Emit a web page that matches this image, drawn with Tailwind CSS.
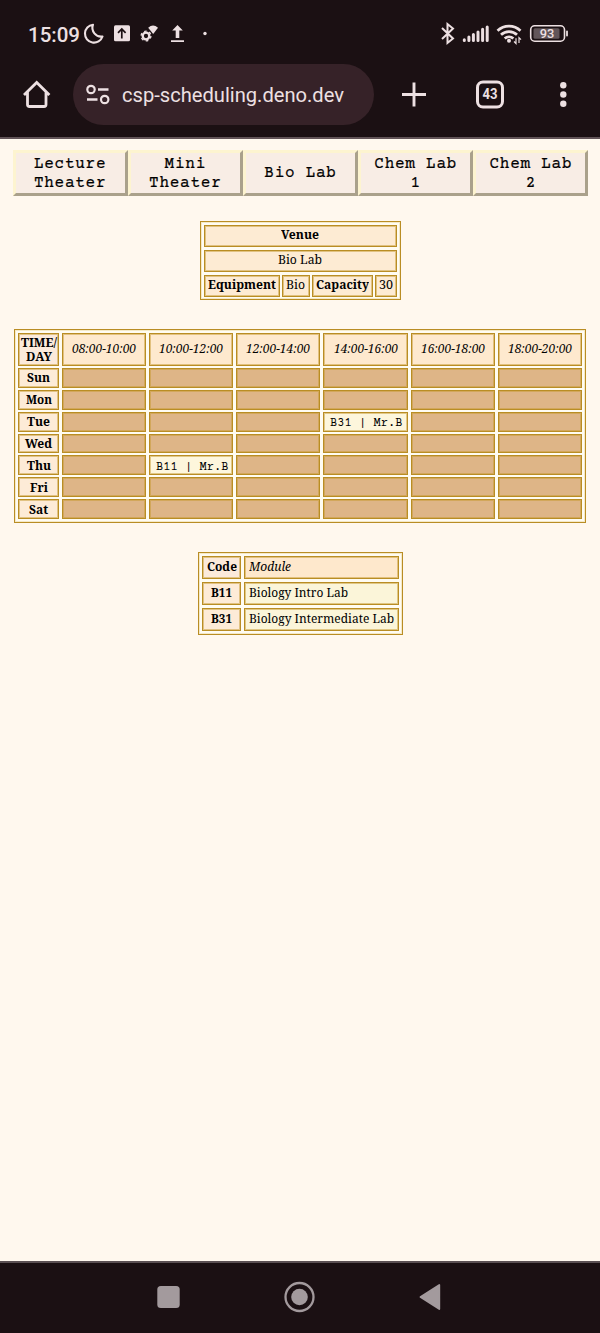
<!DOCTYPE html>
<html lang="en">
<head>
<meta charset="utf-8">
<title>Scheduling</title>
<script src="https://cdn.jsdelivr.net/npm/@tailwindcss/browser@4"></script>
</head>
<body class="bg-[#fff8ee]">
<div class="flex flex-col w-[600px] h-[1333px] overflow-hidden text-[#18110c]">
  <header class="h-[139px] shrink-0 bg-[#1b1013] border-b-2 border-[#615357] font-['Roboto',sans-serif] text-[#ede0e2]">
    <svg class="block" width="600" height="137" viewBox="0 0 600 137" fill="none" stroke="#ede0e2">
      <text x="28" y="41.500" font-size="20.5" font-weight="500" fill="#ede0e2" stroke="none" textLength="52" lengthAdjust="spacingAndGlyphs">15:09</text>
      <path d="M93 24.700A9 9 0 1 0 102.500 36.500A8.800 8.800 0 0 1 93 24.700Z" stroke-width="2.100" stroke-linejoin="round"/>
      <rect x="114" y="25.300" width="16" height="16" rx="1.500" fill="#ede0e2" stroke="none"/>
      <path d="M121.800 38.500V29M118 32.800l3.800-3.800 3.800 3.800" stroke="#1b1013" stroke-width="1.700"/>
      <circle cx="146" cy="36" r="3.300" stroke-width="2.300"/>
      <circle cx="146" cy="36" r="4.900" stroke-width="1.300" stroke-dasharray="2.600 2.531"/>
      <path d="M148.200 27.800Q153 23 158 27.800L153.200 34Z" fill="#ede0e2" stroke="none"/>
      <path d="M177.500 25l5.300 5.600h-3.500V38h-3.600v-7.400h-3.500ZM171 40.300h13v1.800h-13Z" fill="#ede0e2" stroke="none"/>
      <circle cx="205" cy="33.500" r="1.700" fill="#ede0e2" stroke="none"/>
      <path d="M442 28l11 10.500-5.500 4.500V24l5.500 4.500L442 39" stroke-width="2"/>
      <path d="M464.300 39.700v.8M468.900 37v3.500M473.400 34.500v6M478 32v8.500M482.600 29.300v11.200M487.200 27v13.500" stroke-width="3" stroke-linecap="round"/>
      <path d="M497.500 30.700a16.500 16.500 0 0 1 23 0M501 34.800a11.500 11.500 0 0 1 16 0M504.700 38.600a6.500 6.500 0 0 1 8.700 0" stroke-width="2.700"/>
      <circle cx="509" cy="40.700" r="2" fill="#ede0e2" stroke="none"/>
      <path d="M516 38.200v5.300l-2-2M519 43v-5.300l2 2" stroke-width="1.200"/>
      <rect x="530.700" y="25.800" width="33.800" height="15.400" rx="4" stroke-width="1.600"/>
      <rect x="533.500" y="28.300" width="26" height="10.400" rx="1.500" fill="#625559" stroke="none"/>
      <path d="M567 31.500v4" stroke-width="1.800" stroke-linecap="round"/>
      <text x="547" y="38.300" font-size="12.800" font-weight="500" fill="#ede0e2" stroke="none" text-anchor="middle">93</text>
      <path d="M24 95L36.700 82.500 49.400 95M27.500 91.500V104.500q0 2 2 2H44q2 0 2-2V91.500" stroke-width="2.800"/>
      <rect x="73" y="64" width="301" height="61" rx="30.500" fill="#362228" stroke="none"/>
      <circle cx="91" cy="89.500" r="3.700" stroke-width="2.200"/>
      <circle cx="104.700" cy="99.500" r="3.700" stroke-width="2.200"/>
      <path d="M98 89.500h10.500M87 99.500h10.500" stroke-width="2.300"/>
      <text x="122" y="102.300" font-size="20.500" fill="#ede0e2" stroke="none" textLength="222" lengthAdjust="spacingAndGlyphs">csp-scheduling.deno.dev</text>
      <path d="M402 94.500h24M414 82.500v24" stroke-width="2.900"/>
      <rect x="477.500" y="82" width="25" height="25" rx="5.500" stroke-width="3"/>
      <text x="490" y="99.400" font-size="14" font-weight="700" fill="#ede0e2" stroke="none" text-anchor="middle" textLength="15" lengthAdjust="spacingAndGlyphs">43</text>
      <g fill="#ede0e2" stroke="none"><circle cx="563.300" cy="85.300" r="3.200"/><circle cx="563.300" cy="94.500" r="3.200"/><circle cx="563.300" cy="103.700" r="3.200"/></g>
    </svg>
  </header>

  <main class="flex flex-col items-center flex-1 font-['Noto_Serif','DejaVu_Serif_Condensed','DejaVu_Serif',serif]">
    <nav class="mt-[11px] ml-px grid grid-cols-5 w-[576px] h-[46px] text-[16px] leading-[19px] tracking-[0.75px] font-['Courier_Prime','Liberation_Mono',monospace] text-black text-center [&>a]:flex [&>a]:items-center [&>a]:justify-center [&>a]:border-[3px] [&>a]:pt-px [&>a]:border-t-[#fdf4d0] [&>a]:border-l-[#fdf4d0] [&>a]:border-r-[#aaa18b] [&>a]:border-b-[#aaa18b] [&>a]:bg-[#f8ede5] [-webkit-text-stroke:0.2px_black]">
      <a>Lecture<br>Theater</a><a>Mini<br>Theater</a><a>Bio Lab</a><a>Chem Lab<br>1</a><a>Chem Lab<br>2</a>
    </nav>

    <section class="mt-[25px] w-[201px] h-[79px] border border-[#b98d24] shadow-[inset_0_0_0_1px_#e6cc8466] bg-[#fffcf2] p-[3px] flex flex-col gap-[3px] text-[12.5px] leading-[20px] text-center [&_div]:border [&_div]:border-[#b98d24] [&_div]:shadow-[inset_0_0_0_1px_#c59a3080] [&_div]:bg-[#fdebd3] [&_div]:whitespace-nowrap">
      <div class="h-[22px] font-bold"><svg width="38" height="20" class="inline-block align-top"><text x="0" y="13.3" textLength="38" lengthAdjust="spacingAndGlyphs">Venue</text></svg></div>
      <div class="h-[22px]"><svg width="44" height="20" class="inline-block align-top"><text x="0" y="13.3" textLength="44" lengthAdjust="spacingAndGlyphs">Bio Lab</text></svg></div>
      <section class="grid grid-cols-[76px_27px_60px_21px] gap-[3px] h-[22px]">
        <div class="font-bold"><svg width="68" height="20" class="inline-block align-top"><text x="0" y="12.500" textLength="68" lengthAdjust="spacingAndGlyphs">Equipment</text></svg></div>
        <div class="-ml-px"><svg width="19" height="20" class="inline-block align-top"><text x="0" y="12.500" textLength="19" lengthAdjust="spacingAndGlyphs">Bio</text></svg></div>
        <div class="-ml-px"><svg width="53" height="20" class="inline-block align-top font-bold"><text x="0" y="12.500" textLength="53" lengthAdjust="spacingAndGlyphs">Capacity</text></svg></div>
        <div class="-ml-px"><svg width="14" height="20" class="inline-block align-top"><text x="0" y="12.500" textLength="14" lengthAdjust="spacingAndGlyphs">30</text></svg></div>
      </section>
    </section>

    <section id="schedule" class="mt-[29px] w-[572px] h-[194px] border border-[#b98d24] shadow-[inset_0_0_0_1px_#e6cc8466] bg-[#fffcf2] p-[3px] grid grid-cols-[41px_repeat(6,1fr)] grid-rows-[33px_repeat(7,1fr)] gap-x-[3px] gap-y-[2px] text-[12.5px] text-center"></section>

    <section class="mt-[29px] ml-px w-[205px] h-[83px] border border-[#b98d24] shadow-[inset_0_0_0_1px_#e6cc8466] bg-[#fffcf2] p-[3px] grid grid-cols-[39px_155px] grid-rows-3 gap-[3px] text-[12.5px] [&>div]:border [&>div]:border-[#b98d24] [&>div]:shadow-[inset_0_0_0_1px_#c59a3080] [&>div]:pl-[4px]">
      <div class="bg-[#fbeadb] font-bold"><svg width="30" height="20"><text x="0" y="14" textLength="30" lengthAdjust="spacingAndGlyphs">Code</text></svg></div>
      <div class="bg-[#fee8cc] italic"><svg width="44" height="20"><text x="0" y="14" textLength="42" lengthAdjust="spacingAndGlyphs">Module</text></svg></div>
      <div class="bg-[#fdebd7] font-bold"><svg width="30" height="20"><text x="4" y="14.300" textLength="21" lengthAdjust="spacingAndGlyphs">B11</text></svg></div>
      <div class="bg-[#fbf5d9]"><svg width="146" height="20"><text x="0" y="14.300" textLength="99" lengthAdjust="spacingAndGlyphs">Biology Intro Lab</text></svg></div>
      <div class="bg-[#fdebd7] font-bold"><svg width="30" height="20"><text x="4" y="14" textLength="21" lengthAdjust="spacingAndGlyphs">B31</text></svg></div>
      <div class="bg-[#fbf5d9]"><svg width="146" height="20"><text x="0" y="14" textLength="145" lengthAdjust="spacingAndGlyphs">Biology Intermediate Lab</text></svg></div>
    </section>
  </main>

  <footer class="h-[72px] shrink-0 bg-[#1b1013] border-t-2 border-[#5b5053]">
    <svg class="block" width="600" height="70" viewBox="0 1263 600 70" fill="#a39a9d">
      <rect x="157.300" y="1286" width="22.400" height="22" rx="3.500"/>
      <circle cx="299.500" cy="1297" r="14" fill="none" stroke="#a39a9d" stroke-width="2.300"/>
      <circle cx="299.500" cy="1297" r="8.300"/>
      <path d="M420.500 1297L439.300 1285V1309Z" stroke="#a39a9d" stroke-width="1.800" stroke-linejoin="round"/>
    </svg>
  </footer>
</div>
<script>
  const schedule = document.getElementById('schedule');
  const label = (text, width, y = 13) =>
    `<svg width="${width}" height="17" class="overflow-visible"><text x="0" y="${y}" textLength="${width}" lengthAdjust="spacingAndGlyphs">${text}</text></svg>`;
  const cell = (classes, content = '') => {
    schedule.insertAdjacentHTML('beforeend', `<div class="flex items-center justify-center border border-[#b98d24] shadow-[inset_0_0_0_1px_#c59a3080] min-h-0 min-w-0 ${classes}">${content}</div>`);
  };
  cell('flex-col bg-[#fbeadb] font-bold', '<svg width="36" height="30" class="overflow-visible"><text x="0" y="11.5" textLength="36" lengthAdjust="spacingAndGlyphs">TIME/</text><text x="5" y="25.5" textLength="26" lengthAdjust="spacingAndGlyphs">DAY</text></svg>');
  for (let h = 8; h < 20; h += 2) cell('bg-[#fee9ce] italic', label(`${String(h).padStart(2, '0')}:00-${h + 2}:00`, 64, 12));
  const days = [['Sun', 23], ['Mon', 26], ['Tue', 23], ['Wed', 27], ['Thu', 24], ['Fri', 18], ['Sat', 19]];
  const bookings = { Tue: [3, 'B31 | Mr.B'], Thu: [1, 'B11 | Mr.B'] };
  for (const [day, width] of days) {
    cell('bg-[#fdebd7] font-bold', label(day, width));
    for (let i = 0; i < 6; i++) {
      const b = bookings[day];
      if (b && b[0] === i) cell("bg-[#fdf6dc] pl-[2px] font-['Courier_Prime','Liberation_Mono',monospace] text-[12px] [-webkit-text-stroke:0.2px_black] text-black", label(b[1], 72.5, 12.5));
      else cell('bg-[#deb587]');
    }
  }
</script>
</body>
</html>
